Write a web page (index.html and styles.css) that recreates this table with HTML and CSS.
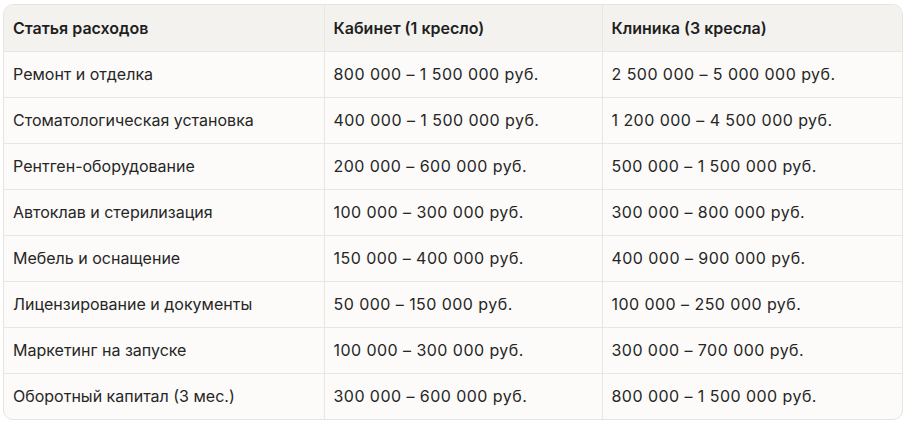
FILE: index.html
```html
<!DOCTYPE html>
<html lang="ru">
<head>
<meta charset="utf-8">
<link rel="stylesheet" href="styles.css">
</head>
<body>
<div class="wrap">
<table class="costs">
<thead>
<tr><th class="c1">Статья расходов</th><th class="c2">Кабинет (1 кресло)</th><th class="c3">Клиника (3 кресла)</th></tr>
</thead>
<tbody>
<tr><td>Ремонт и отделка</td><td class="num">800 000 – 1 500 000 руб.</td><td class="num">2 500 000 – 5 000 000 руб.</td></tr>
<tr><td>Стоматологическая установка</td><td class="num">400 000 – 1 500 000 руб.</td><td class="num">1 200 000 – 4 500 000 руб.</td></tr>
<tr><td>Рентген-оборудование</td><td class="num">200 000 – 600 000 руб.</td><td class="num">500 000 – 1 500 000 руб.</td></tr>
<tr><td>Автоклав и стерилизация</td><td class="num">100 000 – 300 000 руб.</td><td class="num">300 000 – 800 000 руб.</td></tr>
<tr><td>Мебель и оснащение</td><td class="num">150 000 – 400 000 руб.</td><td class="num">400 000 – 900 000 руб.</td></tr>
<tr><td>Лицензирование и документы</td><td class="num">50 000 – 150 000 руб.</td><td class="num">100 000 – 250 000 руб.</td></tr>
<tr><td>Маркетинг на запуске</td><td class="num">100 000 – 300 000 руб.</td><td class="num">300 000 – 700 000 руб.</td></tr>
<tr><td>Оборотный капитал (3 мес.)</td><td class="num">300 000 – 600 000 руб.</td><td class="num">800 000 – 1 500 000 руб.</td></tr>
</tbody>
</table>
</div>
</body>
</html>
```
FILE: styles.css
```css
html, body {
  margin: 0;
  padding: 0;
  background: #ffffff;
}
body {
  padding: 4px 4px 0 3px;
  font-family: "Inter", "Noto Sans", sans-serif;
  font-size: 16px;
  color: #262626;
}
.wrap {
  width: 898px;
  border: 1px solid #e6e4df;
  border-radius: 10px;
  overflow: hidden;
  background: #fcfbf9;
}
.costs {
  width: 100%;
  border-collapse: collapse;
  table-layout: fixed;
}
.costs th, .costs td {
  box-sizing: border-box;
  text-align: left;
  padding: 0 10px 0 9px;
  height: 46px;
  line-height: 20px;
  border-right: 1px solid #e8e6e2;
  border-bottom: 1px solid #e8e6e2;
}
.costs th:last-child, .costs td:last-child {
  border-right: none;
}
.costs tbody tr:last-child td {
  border-bottom: none;
}
.costs th {
  background: #f3f2ef;
  font-weight: 600;
  color: #1f1f1f;
}
.costs td.num {
  letter-spacing: 0.45px;
}
.c1 { width: 320px; }
.c2 { width: 278px; }
```
